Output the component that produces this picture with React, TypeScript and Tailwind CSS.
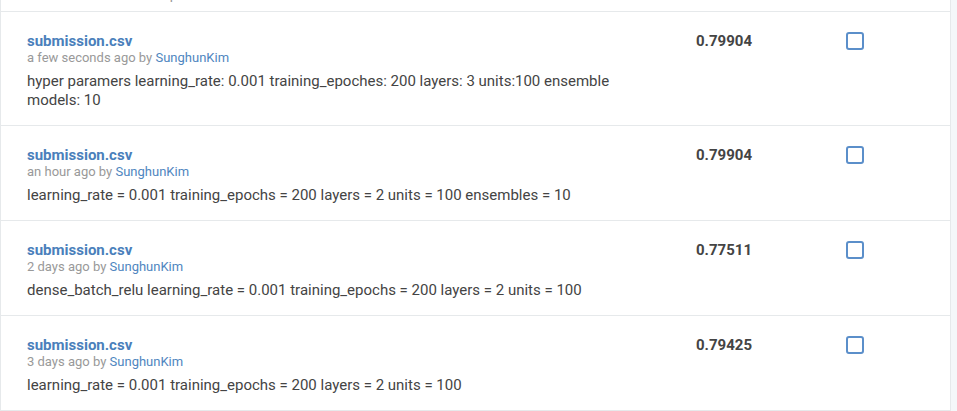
const rows = [
  {
    file: 'submission.csv',
    when: 'a few seconds ago',
    user: 'SunghunKim',
    desc: 'hyper paramers learning_rate: 0.001 training_epoches: 200 layers: 3 units:100 ensemble models: 10',
    score: '0.79904',
  },
  {
    file: 'submission.csv',
    when: 'an hour ago',
    user: 'SunghunKim',
    desc: 'learning_rate = 0.001 training_epochs = 200 layers = 2 units = 100 ensembles = 10',
    score: '0.79904',
  },
  {
    file: 'submission.csv',
    when: '2 days ago',
    user: 'SunghunKim',
    desc: 'dense_batch_relu learning_rate = 0.001 training_epochs = 200 layers = 2 units = 100',
    score: '0.77511',
  },
  {
    file: 'submission.csv',
    when: '3 days ago',
    user: 'SunghunKim',
    desc: 'learning_rate = 0.001 training_epochs = 200 layers = 2 units = 100',
    score: '0.79425',
  },
]

export default function App() {
  return (
    <div className="flex bg-[#f4f7f9] min-h-screen" style={{ fontFamily: 'Roboto, "Liberation Sans", Arial, sans-serif' }}>
      <div className="w-[951px] bg-white border-l border-r border-[#e6e9eb] self-start">
        <div className="h-[12px] overflow-hidden border-b border-[#e6e9eb] flex items-end">
          <div className="flex w-full whitespace-nowrap text-sm text-[#999] leading-[18px] mb-[8px] pl-[26px]">
            <span className="w-[669px]">Submission and Description</span>
            <span className="w-[150px]">Public Score</span>
            <span>Use for Final Score</span>
          </div>
        </div>
        {rows.map((r, i) => (
          <div key={i} className="flex border-b border-[#e6e9eb] pt-[20px] pb-[15px] pl-[26px]">
            <div className="w-[669px] pr-[60px]">
              <div className="text-[15px] font-bold text-[#4a7fbb] leading-[18px]">{r.file}</div>
              <div className="text-[13px] text-[#999] leading-[16px]">
                {r.when} by <span className="text-[#4f86c0]">{r.user}</span>
              </div>
              <div className="mt-[6px] text-[15px] text-[#444] leading-[19px]">{r.desc}</div>
            </div>
            <div className="w-[150px] text-[15px] font-bold text-[#444] leading-[18px]">{r.score}</div>
            <div>
              <div className="w-[18px] h-[18px] rounded-[3px] border-2 border-[#5b8fca] bg-white" />
            </div>
          </div>
        ))}
      </div>
    </div>
  )
}
